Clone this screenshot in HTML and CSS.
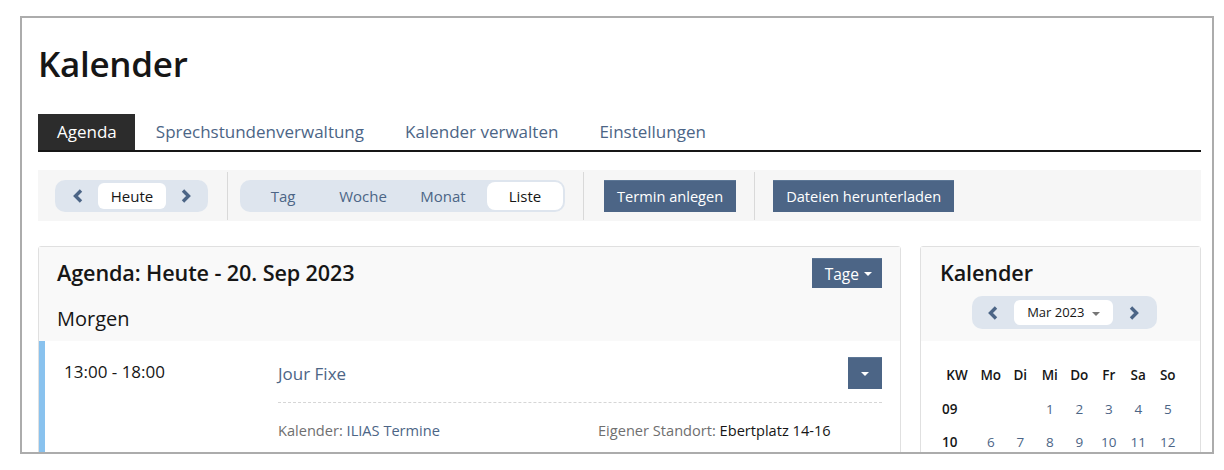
FILE: index.html
```
<!DOCTYPE html>
<html lang="de">
<head>
<meta charset="utf-8">
<title>Kalender</title>
<link rel="stylesheet" href="styles.css">
</head>
<body>
<div class="frame">
  <h1 class="title">Kalender</h1>
  <nav class="tabs">
    <a class="tab active">Agenda</a>
    <a class="tab">Sprechstundenverwaltung</a>
    <a class="tab">Kalender verwalten</a>
    <a class="tab">Einstellungen</a>
  </nav>
  <div class="toolbar">
    <div class="tb-group g1">
      <div class="pill">
        <span class="chev"><svg width="12" height="14" viewBox="0 0 12 14"><path d="M9 1.5 L3.5 7 L9 12.5" fill="none" stroke="#4c6586" stroke-width="3.4"/></svg></span>
        <span class="pill-item on today">Heute</span>
        <span class="chev"><svg width="12" height="14" viewBox="0 0 12 14"><path d="M3 1.5 L8.5 7 L3 12.5" fill="none" stroke="#4c6586" stroke-width="3.4"/></svg></span>
      </div>
    </div>
    <div class="tb-group g2">
      <div class="pill seg">
        <span class="seg-item">Tag</span>
        <span class="seg-item">Woche</span>
        <span class="seg-item">Monat</span>
        <span class="seg-item on">Liste</span>
      </div>
    </div>
    <div class="tb-group g3"><span class="btn">Termin anlegen</span></div>
    <div class="tb-group g4"><span class="btn">Dateien herunterladen</span></div>
  </div>

  <div class="columns">
    <section class="panel agenda">
      <div class="panel-head">
        <div class="head-row">
          <h2 class="panel-title">Agenda: Heute - 20. Sep 2023</h2>
          <span class="btn btn-sm">Tage <i class="caret white"></i></span>
        </div>
        <h3 class="day">Morgen</h3>
      </div>
      <div class="event">
        <div class="ev-time">13:00 - 18:00</div>
        <div class="ev-main">
          <div class="ev-top">
            <a class="ev-title">Jour Fixe</a>
            <span class="btn btn-icon"><i class="caret white"></i></span>
          </div>
          <div class="ev-props">
            <div class="prop"><span class="lbl">Kalender:</span> <a class="link">ILIAS Termine</a></div>
            <div class="prop"><span class="lbl">Eigener Standort:</span> <span class="val">Ebertplatz 14-16</span></div>
          </div>
        </div>
      </div>
    </section>

    <aside class="panel cal">
      <div class="panel-head cal-head">
        <h2 class="panel-title">Kalender</h2>
        <div class="pill month-nav">
          <span class="chev"><svg width="12" height="14" viewBox="0 0 12 14"><path d="M9 1.5 L3.5 7 L9 12.5" fill="none" stroke="#4c6586" stroke-width="3.4"/></svg></span>
          <span class="pill-item on month">Mar 2023 <i class="caret grey"></i></span>
          <span class="chev"><svg width="12" height="14" viewBox="0 0 12 14"><path d="M3 1.5 L8.5 7 L3 12.5" fill="none" stroke="#4c6586" stroke-width="3.4"/></svg></span>
        </div>
      </div>
      <table class="month">
        <thead>
          <tr><th>KW</th><th>Mo</th><th>Di</th><th>Mi</th><th>Do</th><th>Fr</th><th>Sa</th><th>So</th></tr>
        </thead>
        <tbody>
          <tr><th>09</th><td></td><td></td><td>1</td><td>2</td><td>3</td><td>4</td><td>5</td></tr>
          <tr><th>10</th><td>6</td><td>7</td><td>8</td><td>9</td><td>10</td><td>11</td><td>12</td></tr>
        </tbody>
      </table>
    </aside>
  </div>
</div>
</body>
</html>
```

FILE: styles.css
```
* { box-sizing: border-box; }
html, body { margin: 0; padding: 0; background: #fff; }
body {
  font-family: "Open Sans", "Noto Sans", sans-serif;
  color: #161616;
}

.frame {
  margin: 16px 0 0 20px;
  width: 1194px;
  height: 438px;
  border: 2px solid #acacac;
  padding: 24px 11px 0 16px;
  overflow: hidden;
}

.title {
  margin: 0;
  font-size: 35px;
  line-height: 44px;
  font-weight: 600;
  letter-spacing: -0.3px;
}

.tabs {
  margin-top: 28px;
  display: flex;
  border-bottom: 2px solid #161616;
  height: 38px;
}
.tab {
  font-size: 17px;
  line-height: 36px;
  padding: 0 20px 0 21px;
  color: #4c6586;
}
.tab.active {
  background: #2c2c2c;
  color: #fff;
  padding: 0 18px 0 19px;
}

.toolbar {
  margin-top: 18px;
  height: 51px;
  background: #f6f6f6;
  display: flex;
  align-items: center;
}
.tb-group {
  height: 48px;
  display: flex;
  align-items: center;
  padding: 0 19px;
  border-left: 1px solid #d9d9d9;
}
.tb-group.g1 { border-left: 0; padding-left: 17px; padding-right: 19px; }
.tb-group.g2 { padding-left: 12px; padding-right: 18px; }
.tb-group.g3 { padding-left: 20px; padding-right: 18px; }
.tb-group.g4 { padding-left: 18px; }

.pill {
  display: flex;
  align-items: center;
  background: #dee5ee;
  border-radius: 10px;
  height: 32px;
  padding: 0 2px 0 3px;
}
.chev {
  width: 40px;
  display: flex;
  justify-content: center;
  align-items: center;
}
.pill-item {
  font-size: 15px;
  height: 26px;
  line-height: 26px;
  border-radius: 6px;
}
.pill-item.today { width: 68px; text-align: center; }
.pill-item.on { background: #fff; }

.seg-item {
  width: 80px;
  text-align: center;
  font-size: 15px;
  color: #4c6586;
  height: 28px;
  line-height: 28px;
  border-radius: 8px;
}
.seg-item.on { background: #fff; color: #161616; width: 76px; margin-left: 4px; }

.btn {
  display: inline-flex;
  align-items: center;
  justify-content: center;
  background: #4c6586;
  color: #fff;
  font-size: 14.6px;
  height: 32px;
  padding: 0 13px;
  border-top: 1px solid #5d7796;
}

.caret {
  display: inline-block;
  width: 0; height: 0;
  border-left: 4px solid transparent;
  border-right: 4px solid transparent;
  border-top: 4px solid #fff;
  vertical-align: middle;
}
.caret.grey { border-top-color: #767676; margin-left: 4px; }

.columns {
  margin-top: 25px;
  display: flex;
  gap: 19px;
  align-items: flex-start;
}
.panel {
  border: 1px solid #e0e0e0;
  border-radius: 3px;
  background: #fff;
}
.agenda { width: 863px; }
.cal { width: 281px; }

.panel-head {
  background: #f9f9f9;
  padding: 11px 18px 0 18px;
}
.agenda .panel-head { height: 94px; }
.head-row {
  display: flex;
  align-items: center;
  justify-content: space-between;
  height: 30px;
}
.panel-title {
  margin: 0;
  font-size: 21.6px;
  font-weight: 600;
  line-height: 30px;
  letter-spacing: -0.1px;
}
.btn-sm { height: 30px; padding: 0 10px 0 13px; font-size: 15.5px; gap: 5px; }

.day {
  margin: 17px 0 0;
  font-size: 20px;
  font-weight: 400;
  line-height: 28px;
}

.event {
  display: flex;
  border-left: 6px solid #89c2ee;
  padding: 15px 18px 0 19px;
  height: 120px;
}
.ev-time {
  width: 214px;
  font-size: 17px;
  line-height: 30px;
  padding-top: 1px;
}
.ev-main { flex: 1; }
.ev-top {
  display: flex;
  justify-content: space-between;
  align-items: center;
  height: 34px;
  border-bottom: 1px dashed #d6d6d6;
  box-sizing: content-box;
  padding-bottom: 12px;
}
.ev-title { font-size: 17px; color: #4c6586; }
.btn-icon { width: 34px; height: 32px; padding: 0; }

.ev-props {
  display: flex;
  margin-top: 17px;
  font-size: 14.6px;
  line-height: 20px;
}
.prop:first-child { width: 320px; }
.lbl { color: #6f6f6f; }
.link { color: #4c6586; }
.val { color: #161616; }

.cal-head {
  padding: 11px 0 11px 19px;
  height: 94px;
}
.month-nav {
  width: 185px;
  height: 33px;
  margin: 8px 0 0 32px;
  padding: 0;
}
.month-nav .chev { width: 42px; }
.pill-item.month {
  width: 99px;
  height: 25px;
  line-height: 25px;
  font-size: 13px;
  text-align: center;
  padding: 0;
}

table.month {
  border-collapse: collapse;
  margin: 17px 0 0 17px;
  font-size: 13.5px;
}
table.month th, table.month td {
  height: 33px;
  text-align: center;
  padding: 0;
  width: 29.5px;
}
table.month thead th { font-weight: 600; height: 34px; }
table.month tbody th { font-weight: 600; text-align: left; padding-left: 4px; }
table.month tr > :first-child { width: 38px; }
table.month td { color: #4c6586; }
```
